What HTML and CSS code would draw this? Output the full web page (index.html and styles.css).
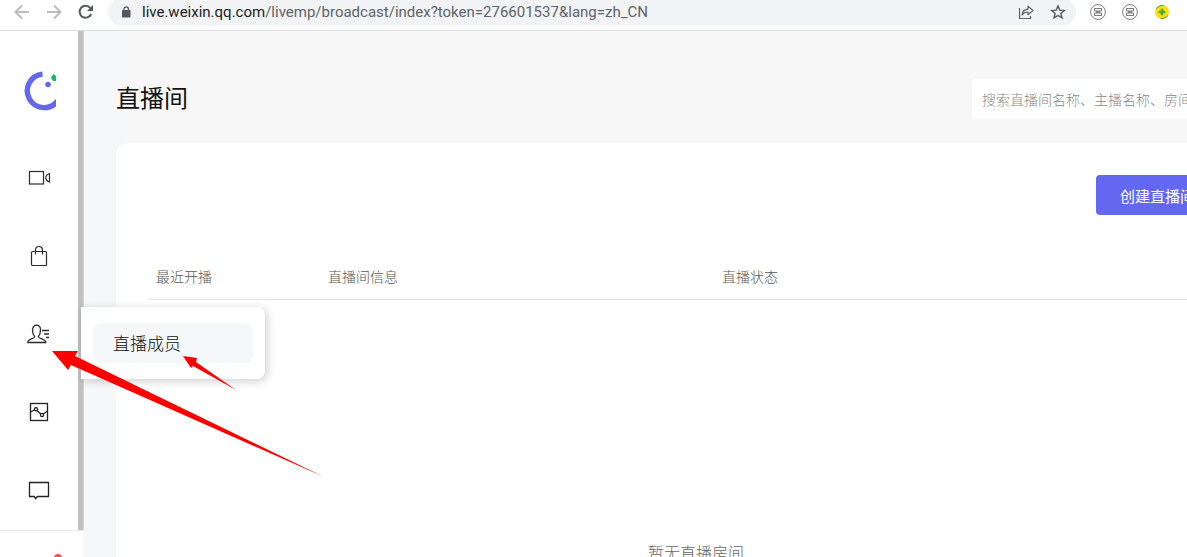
FILE: index.html
```html
<!DOCTYPE html>
<html lang="zh-CN">
<head>
    <meta charset="UTF-8">
    <meta name="viewport" content="width=device-width, initial-scale=1.0">
    <title>直播间</title>
    <link rel="stylesheet" href="styles.css">
</head>
<body>
    <header class="browser-bar">
        <div class="browser-nav">
            <button class="icon-btn" aria-label="后退">
                <svg width="16" height="16" viewBox="0 0 16 16" fill="none" stroke="#babcbe" stroke-width="2"><path d="M15 8H2M8 1.5L1.5 8L8 14.5"/></svg>
            </button>
            <button class="icon-btn" aria-label="前进">
                <svg width="16" height="16" viewBox="0 0 16 16" fill="none" stroke="#babcbe" stroke-width="2"><path d="M1 8H14M8 1.5L14.5 8L8 14.5"/></svg>
            </button>
            <button class="icon-btn" aria-label="刷新">
                <svg width="16" height="16" viewBox="0 0 16 16"><path d="M13.2 10A6 6 0 1 1 12.3 3.9" fill="none" stroke="#55585c" stroke-width="2"/><path d="M15 1V7H9Z" fill="#55585c"/></svg>
            </button>
        </div>
        <div class="address">
            <svg class="lock" width="10" height="12" viewBox="0 0 10 12"><rect x="1" y="4" width="8.500" height="7.500" rx="1" fill="#55585c"/><path d="M3 5V3a2.200 2.200 0 0 1 4.400 0V5" fill="none" stroke="#55585c" stroke-width="1.300"/></svg>
            <div class="url"><span class="host">live.weixin.qq.com</span>/livemp/broadcast/index?token=276601537&amp;lang=zh_CN</div>
            <button class="icon-btn" aria-label="分享">
                <svg width="16" height="16" viewBox="0 0 16 16" fill="none" stroke="#5f6368" stroke-width="1.200"><path d="M1.500 4V14.500H12.500V12"/><path d="M4 11C4.500 7 6.500 5.300 10 5.200V2.200L15 6.500L10 10.700V8C7.500 8 5.500 8.700 4 11Z" stroke-linejoin="round"/></svg>
            </button>
            <button class="icon-btn" aria-label="收藏">
                <svg width="16" height="16" viewBox="0 0 16 16" fill="none" stroke="#55585c" stroke-width="1.400"><path d="M8 2L9.800 6.100L14.300 6.500L10.900 9.500L11.900 13.900L8 11.500L4.100 13.900L5.100 9.500L1.700 6.500L6.200 6.100Z"/></svg>
            </button>
        </div>
        <div class="extensions">
            <button class="icon-btn" aria-label="扩展程序一">
                <svg width="16" height="16" viewBox="0 0 16 16" fill="none" stroke="#77797c"><circle cx="8" cy="8" r="7.400"/><path d="M4 4.500H12M4 11.500H12M4.500 4.500V7H11.500V4.500M4.500 11.500V9H11.500V11.500M6 7L10 9M10 7L6 9"/></svg>
            </button>
            <button class="icon-btn" aria-label="扩展程序二">
                <svg width="16" height="16" viewBox="0 0 16 16" fill="none" stroke="#77797c"><circle cx="8" cy="8" r="7.400"/><path d="M4 4.500H12M4 11.500H12M4.500 4.500V7H11.500V4.500M4.500 11.500V9H11.500V11.500M6 7L10 9M10 7L6 9"/></svg>
            </button>
            <button class="icon-btn" aria-label="扩展程序三">
                <svg width="16" height="16" viewBox="0 0 16 16"><circle cx="8" cy="8" r="7" fill="#fbe20a"/><path d="M1.300 6A7 7 0 0 1 11 1.700Q5 1.500 1.300 6ZM14.700 10A7 7 0 0 1 5 14.300Q11 14.500 14.700 10Z" fill="#4ea83a"/><path d="M8 4.700V11.300M4.700 8H11.300" stroke="#4ea83a" stroke-width="2.500"/></svg>
            </button>
        </div>
    </header>

    <div class="app">
        <aside class="sidebar">
            <div class="sidebar-body">
                <nav class="menu">
                    <a class="logo" href="#" aria-label="首页">
                        <svg width="32" height="40" viewBox="0 0 32 40"><path d="M18.500 3.100A16.800 16.800 0 1 0 33.500 30" fill="none" stroke="#6467f0" stroke-width="5.400"/><circle cx="24" cy="13.500" r="2.800" fill="#6467f0"/><path d="M29.300 3L32 5V10H29L27 6.800Z" fill="#07c160"/><circle cx="32" cy="12" r="1" fill="#fbe3b0"/></svg>
                    </a>
                    <div class="menu-item">
                        <a href="#" aria-label="直播">
                            <svg width="24" height="24" viewBox="0 0 24 24" fill="none" stroke="#2b2b2b" stroke-width="1.200"><rect x="2.500" y="5.500" width="14" height="12.500"/><path d="M22.500 7.500V16C17.500 14 17.500 9.500 22.500 7.500Z"/></svg>
                        </a>
                    </div>
                    <div class="menu-item">
                        <a href="#" aria-label="商品">
                            <svg width="24" height="24" viewBox="0 0 24 24" fill="none" stroke="#2b2b2b" stroke-width="1.200"><rect x="4.500" y="7.500" width="15" height="14" rx="1"/><path d="M8.500 10.500V6a3.500 3.500 0 0 1 7 0V10.500"/></svg>
                        </a>
                    </div>
                    <div class="menu-item">
                        <a href="#" aria-label="成员">
                            <svg width="24" height="24" viewBox="0 0 24 24" fill="none" stroke="#2b2b2b" stroke-width="1.300"><path d="M7.700 14.700C5.500 12.500 5.500 9.500 5.500 8C5.500 1.500 13.500 1.500 13.500 8C13.500 9.500 13.500 12.500 11.300 14.700C11.500 17 18.500 16.500 18.800 20.500H.700C1 16.500 7.500 17 7.700 14.700Z" stroke-linejoin="round"/><path d="M15 8.500H22M17 12H22M19 15.500H22"/></svg>
                        </a>
                        <div class="submenu">
                            <a href="#">直播成员</a>
                        </div>
                    </div>
                    <div class="menu-item">
                        <a href="#" aria-label="数据">
                            <svg width="24" height="24" viewBox="0 0 24 24" fill="none" stroke="#222" stroke-width="1.300"><rect x="3.500" y="3.500" width="17" height="17"/><path d="M3.500 12L7.500 10M10.200 10.700L13.800 14M16.300 14L20.500 11"/><circle cx="9" cy="9.300" r="1.600"/><circle cx="15" cy="15" r="1.600"/></svg>
                        </a>
                    </div>
                    <div class="menu-item">
                        <a href="#" aria-label="消息">
                            <svg width="24" height="24" viewBox="0 0 24 24" fill="none" stroke="#222" stroke-width="1.300" stroke-linejoin="round"><path d="M2.500 4.500H21.500V18.500H10.500L8.500 20.700L7.500 18.500H2.500Z"/></svg>
                        </a>
                    </div>
                </nav>
                <div class="scrollbar"></div>
            </div>
            <div class="sidebar-foot"><span class="red-dot"></span></div>
        </aside>

        <main class="main">
            <div class="page-head">
                <h1>直播间</h1>
                <input class="search" type="text" aria-label="搜索" placeholder="搜索直播间名称、主播名称、房间号">
            </div>
            <section class="card">
                <div class="card-actions">
                    <button class="create-btn">创建直播间</button>
                </div>
                <table class="live-table">
                    <thead>
                        <tr>
                            <th class="col-time">最近开播</th>
                            <th class="col-info">直播间信息</th>
                            <th>直播状态</th>
                        </tr>
                    </thead>
                </table>
                <p class="empty">暂无直播房间</p>
            </section>
        </main>
    </div>

    <!-- red pointer arrows -->
    <svg class="arrows" width="340" height="490" viewBox="0 0 340 490" fill="#f00">
        <path d="M52 351L78 351L75 356L324 477L71 365L68 370Z"/>
        <path d="M183 356L197 358L196 362L236 390L193 366L191 368Z"/>
    </svg>
</body>
</html>
```

FILE: styles.css
```css
* { box-sizing: border-box; }
body {
    margin: 0;
    height: 100vh;
    display: flex;
    flex-direction: column;
    overflow: hidden;
    font-family: "Noto Sans CJK SC", sans-serif;
    font-weight: 300;
    background: #f7f7f7;
    color: #111;
}
a { color: inherit; text-decoration: none; }
svg { display: block; }

/* browser bar */
.browser-bar {
    flex: none;
    height: 31px;
    display: flex;
    align-items: flex-end;
    padding-bottom: 4px;
    overflow: hidden;
    background: #fff;
    border-bottom: 1px solid #d9dbde;
}
.browser-nav, .extensions {
    display: flex;
    align-items: center;
    gap: 16px;
    height: 28px;
}
.browser-nav { padding: 0 14px; }
.extensions { padding: 0 17px 0 14px; }
.icon-btn {
    width: 16px;
    height: 16px;
    padding: 0;
    border: none;
    background: none;
    cursor: pointer;
}
.address {
    flex: 1;
    height: 28px;
    display: flex;
    align-items: center;
    gap: 16px;
    padding: 0 10px 0 13px;
    border-radius: 14px;
    background: #f1f3f4;
}
.lock { margin-right: -5px; }
.url {
    flex: 1;
    font: 400 15px/20px Roboto, sans-serif;
    white-space: nowrap;
    color: #5f6368;
}
.host { color: #202124; }

.app {
    flex: 1;
    min-height: 0;
    display: flex;
}

/* sidebar */
.sidebar {
    flex: none;
    width: 84px;
    display: flex;
    flex-direction: column;
    background: #f5f7f9;
}
.sidebar-body {
    flex: 1;
    display: flex;
    background: #fff;
}
.menu { flex: 1; }
.scrollbar {
    width: 6px;
    background: #c1c1c1;
    border-right: 1px solid #d2d3d4;
}
.logo {
    display: block;
    height: 108px;
    padding: 40px 0 0 24px;
}
.menu-item {
    position: relative;
    height: 78px;
    display: flex;
    align-items: center;
    justify-content: center;
}
.submenu {
    position: absolute;
    left: 81px;
    top: 12px;
    z-index: 2;
    padding: 16px 12px;
    background: #fff;
    border-radius: 0 8px 8px 0;
    box-shadow: 2px 2px 10px rgba(0, 0, 0, 0.2);
}
.submenu a {
    display: block;
    width: 160px;
    padding: 0 20px;
    font-size: 17px;
    line-height: 40px;
    border-radius: 8px;
    background: #f5f7f9;
}
.sidebar-foot {
    position: relative;
    height: 27px;
    margin-right: 1px;
    overflow: hidden;
    background: #fff;
    border-top: 1px solid #ebebeb;
}
.red-dot {
    position: absolute;
    left: 54px;
    top: 23px;
    width: 8px;
    height: 8px;
    border-radius: 50%;
    background: #fa5151;
}

/* content */
.main {
    flex: 1 0 1192px;
    display: flex;
    flex-direction: column;
    min-width: 0;
    border-left: 32px solid #f5f7f9;
}
.page-head {
    display: flex;
    align-items: flex-start;
    justify-content: space-between;
    padding: 48px 0 24px;
}
h1 {
    margin: 0;
    font-size: 24px;
    font-weight: 400;
    line-height: 36px;
}
.search {
    width: 304px;
    height: 40px;
    padding: 0 10px;
    border: none;
    border-radius: 4px;
    background: #fff;
    font: inherit;
    font-size: 14px;
}
.search::placeholder { color: #888; }
.card {
    flex: 1;
    padding: 32px;
    background: #fff;
    border-radius: 12px 12px 0 0;
}
.card-actions {
    display: flex;
    justify-content: flex-end;
    margin-bottom: 40px;
}
.create-btn {
    width: 148px;
    height: 40px;
    padding: 0 24px;
    border: none;
    border-radius: 4px;
    background: #6467f0;
    color: #fff;
    font: inherit;
    font-size: 15px;
    font-weight: 400;
    text-align: left;
    white-space: nowrap;
    cursor: pointer;
}
.live-table {
    width: 100%;
    table-layout: fixed;
    border-collapse: separate;
    border-spacing: 0;
}
.live-table th {
    height: 45px;
    padding: 0 8px 2px;
    border-bottom: 1px solid #e4e4e4;
    font-size: 14px;
    font-weight: 300;
    text-align: left;
    color: #555;
}
.col-time { width: 172px; }
.col-info { width: 394px; }
.empty {
    margin: 240px 0 0;
    font-size: 16px;
    line-height: 24px;
    text-align: center;
    color: #666;
}

.arrows {
    position: absolute;
    left: 0;
    top: 0;
    z-index: 3;
    pointer-events: none;
}
```
